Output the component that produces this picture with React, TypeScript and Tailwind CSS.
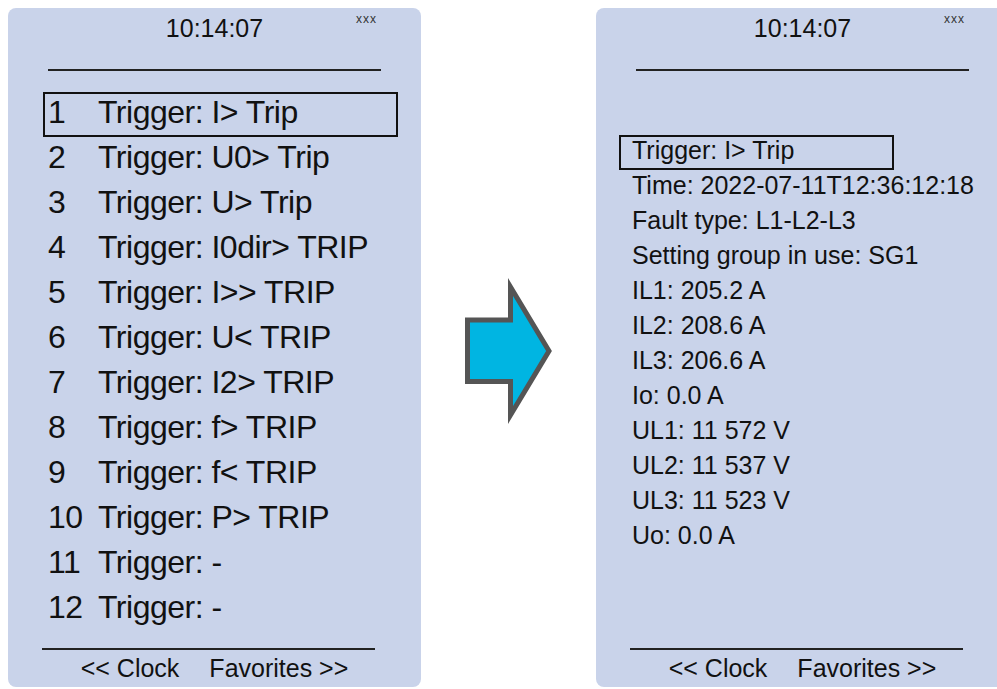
import React from "react";

const leftItems: [string, string][] = [
  ["1", "Trigger: I> Trip"],
  ["2", "Trigger: U0> Trip"],
  ["3", "Trigger: U> Trip"],
  ["4", "Trigger: I0dir> TRIP"],
  ["5", "Trigger: I>> TRIP"],
  ["6", "Trigger: U< TRIP"],
  ["7", "Trigger: I2> TRIP"],
  ["8", "Trigger: f> TRIP"],
  ["9", "Trigger: f< TRIP"],
  ["10", "Trigger: P> TRIP"],
  ["11", "Trigger: -"],
  ["12", "Trigger: -"],
];

const rightItems = [
  "Trigger: I> Trip",
  "Time: 2022-07-11T12:36:12:18",
  "Fault type: L1-L2-L3",
  "Setting group in use: SG1",
  "IL1: 205.2 A",
  "IL2: 208.6 A",
  "IL3: 206.6 A",
  "Io: 0.0 A",
  "UL1: 11 572 V",
  "UL2: 11 537 V",
  "UL3: 11 523 V",
  "Uo: 0.0 A",
];

function Header() {
  return (
    <div className="relative">
      <div className="pt-[5px] text-center text-[25px] leading-[30px]">10:14:07</div>
      <div className="absolute left-[348px] top-[5px] text-[12px] leading-[12px] tracking-[1px] text-[#333]">
        xxx
      </div>
      <div className="ml-[40px] mt-[26px] h-[2px] w-[333px] bg-[#222]" />
    </div>
  );
}

function Footer() {
  return (
    <div className="pb-[4px]">
      <div className="ml-[34px] h-[2px] w-[333px] bg-[#222]" />
      <div className="mt-[3px] flex justify-center gap-[30px] text-[25px] leading-[30px]">
        <span>&lt;&lt; Clock</span>
        <span>Favorites &gt;&gt;</span>
      </div>
    </div>
  );
}

export default function App() {
  return (
    <div className="flex h-[689px] w-[997px] overflow-hidden bg-white pl-[8px] pt-[8px] font-['Liberation_Sans',Arial,sans-serif] text-[#111]">
      {/* Left panel */}
      <div className="flex h-[679px] w-[413px] shrink-0 flex-col rounded-[8px] bg-[#c9d3ea]">
        <Header />
        <div className="ml-[35px] mt-[21px] flex flex-col">
          {leftItems.map(([n, t], i) => (
            <div
              key={n}
              className={
                "flex h-[45px] w-[355px] whitespace-nowrap border-2 pl-[3px] text-[32px] leading-[36px] tracking-[-0.5px] " +
                (i === 0 ? "border-[#111]" : "border-transparent")
              }
            >
              <span className="w-[50px] shrink-0">{n}</span>
              <span>{t}</span>
            </div>
          ))}
        </div>
        <div className="flex-1" />
        <Footer />
      </div>

      {/* Arrow */}
      <div className="w-[175px] shrink-0">
        <svg
          className="ml-[39px] mt-[262px] block"
          width="100"
          height="160"
          viewBox="460 270 100 160"
        >
          <polygon
            points="467.5,320 510.5,320 510.5,287 549,351 510.5,415 510.5,381.5 467.5,381.5"
            fill="#00b5e2"
            stroke="#555555"
            strokeWidth="5"
            strokeLinejoin="miter"
          />
        </svg>
      </div>

      {/* Right panel */}
      <div className="flex h-[679px] w-[413px] shrink-0 flex-col rounded-[8px] bg-[#c9d3ea]">
        <Header />
        <div className="ml-[23px] mt-[64px] flex flex-col">
          {rightItems.map((t, i) => (
            <div
              key={t}
              className={
                "h-[35px] w-[275px] whitespace-nowrap border-2 pl-[11px] text-[25px] leading-[27px] " +
                (i === 0 ? "border-[#111]" : "border-transparent")
              }
            >
              {t}
            </div>
          ))}
        </div>
        <div className="flex-1" />
        <Footer />
      </div>
    </div>
  );
}
